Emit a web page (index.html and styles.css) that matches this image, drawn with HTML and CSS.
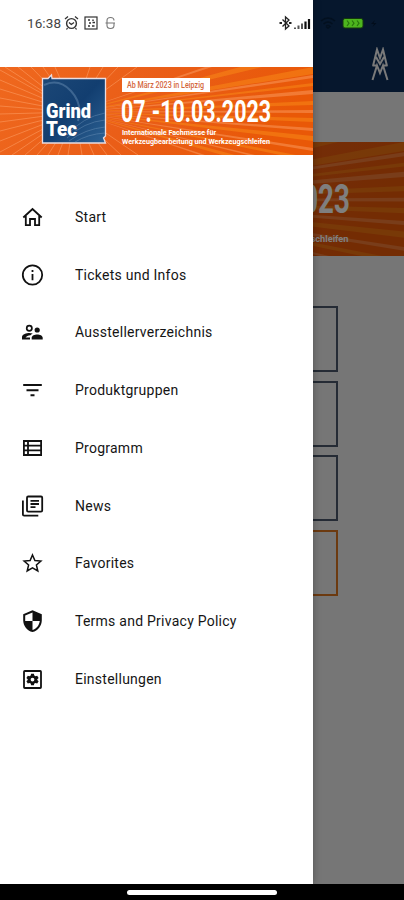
FILE: index.html
```
<!DOCTYPE html>
<html lang="de">
<head>
<meta charset="utf-8">
<meta name="viewport" content="width=device-width, initial-scale=1">
<title>GrindTec</title>
<link rel="stylesheet" href="styles.css">
</head>
<body>
<svg class="defs" aria-hidden="true">
  <defs>
    <linearGradient id="orange" x1="0" x2="1" y1="0" y2="0.2">
      <stop offset="0" stop-color="#ef681e"/><stop offset=".5" stop-color="#ea5e18"/><stop offset="1" stop-color="#e95807"/>
    </linearGradient>
    <linearGradient id="blue" x1="0" x2="1" y1="0" y2="1">
      <stop offset="0" stop-color="#1c4877"/><stop offset=".5" stop-color="#123e70"/><stop offset="1" stop-color="#2d6294"/>
    </linearGradient>
  </defs>
  <symbol id="banner" viewBox="0 0 313 88" preserveAspectRatio="none">
    <rect width="313" height="88" fill="url(#orange)"/>
    <g fill="#f98c18" opacity=".5">
      <path d="M75 45L240 0H262ZM75 45L313 0V7ZM75 45L313 16V19ZM75 45L313 34V38ZM75 45L313 51V55ZM75 45L313 69V74ZM75 45L296 88H280ZM75 45L235 88H222Z"/>
    </g>
    <g fill="#ffb078" opacity=".4">
      <path d="M75 45L313 8V11ZM75 45L313 23V27ZM75 45L313 43V46ZM75 45L313 61V64ZM75 45L313 81V84ZM75 45L205 0H212ZM75 45L255 88H248ZM75 45L205 88H200Z"/>
    </g>
    <g stroke="#ffa56c" stroke-width="1" opacity=".5">
      <path d="M75 45L0 3M75 45L0 13M75 45L0 22M75 45L0 31M75 45L0 39M75 45L0 47M75 45L0 55M75 45L0 64M75 45L0 74M75 45L0 85M75 45L12 88M75 45L25 88M75 45L37 88M75 45L48 88M75 45L58 88M75 45L68 88M75 45L82 88M75 45L94 88M75 45L107 88M75 45L121 88M75 45L138 88M75 45L5 0M75 45L18 0M75 45L31 0M75 45L43 0M75 45L55 0M75 45L90 0M75 45L103 0M75 45L118 0M75 45L137 0"/>
    </g>
    <path d="M42.500 11.500H48L51.500 8L52 11.500H105.500V69L103.500 71L105.500 76H42.500Z" fill="url(#blue)" stroke="#e9dce0" stroke-width="1.300"/>
    <g fill="none" stroke="#789cc0" opacity=".4">
      <path d="M44 18Q59 11 71 24T78 54" stroke-width="2"/>
      <path d="M67 68Q83 50 105 46M67 71Q84 55 105 53M69 74Q85 62 105 60M75 75Q88 67 105 66" stroke-width="1"/>
    </g>
    <g class="banner-text">
      <text x="46" y="51" font-size="20" font-weight="900" textLength="45" lengthAdjust="spacingAndGlyphs">Grind</text>
      <text x="46" y="69" font-size="20" font-weight="900" textLength="31" lengthAdjust="spacingAndGlyphs">Tec</text>
      <rect x="122" y="11" width="88" height="14" fill="#fff"/>
      <text class="banner-date" x="127" y="21.200" font-size="8.500" font-weight="500" textLength="77" lengthAdjust="spacingAndGlyphs">Ab März 2023 in Leipzig</text>
      <text x="121" y="54.500" font-size="32" font-weight="700" textLength="150" lengthAdjust="spacingAndGlyphs">07.-10.03.2023</text>
      <text x="122" y="67.500" font-size="7.300" font-weight="700" textLength="94" lengthAdjust="spacingAndGlyphs">Internationale Fachmesse für</text>
      <text x="122" y="77.300" font-size="7.300" font-weight="700" textLength="148" lengthAdjust="spacingAndGlyphs">Werkzeugbearbeitung und Werkzeugschleifen</text>
    </g>
  </symbol>
</svg>

<div class="phone">
  <div class="screen">
    <main class="page">
      <header class="app-bar">
        <svg class="fair-logo" width="18" height="34" viewBox="0 0 18 34" aria-hidden="true">
          <path d="M2 19L6 2.500L9 11L12 2.500L16 19M5 10L9 17L13 10M1.500 33L6 18.500L9 26L12 18.500L16.500 33M1.500 18.500H6.500M11.500 18.500H16.500"/>
        </svg>
      </header>
      <svg class="page-banner" aria-hidden="true"><use href="#banner"/></svg>
      <div class="tiles">
        <div class="tile"></div>
        <div class="tile"></div>
        <div class="tile"></div>
        <div class="tile tile-accent"></div>
      </div>
    </main>
    <div class="scrim"></div>

    <aside class="drawer">
      <svg class="drawer-banner" role="img" aria-label="GrindTec"><use href="#banner"/></svg>
      <nav class="menu">
        <a class="item"><svg class="icon line" viewBox="0 0 26 26"><path d="M4.300 13.500L13.500 5L22.700 13.500M6.800 12V21.200H11V15H16V21.200H20.200V12"/></svg><span>Start</span></a>
        <a class="item"><svg class="icon line" viewBox="0 0 26 26"><circle cx="13.500" cy="13" r="9.700"/><path d="M13.500 12V18.300M13.500 8V10"/></svg><span>Tickets und Infos</span></a>
        <a class="item"><svg class="icon" viewBox="0 0 26 26"><circle cx="10.300" cy="9.200" r="2.600" fill="none" stroke="#111" stroke-width="1.700"/><circle cx="18.200" cy="11" r="2.600"/><path d="M18.200 15.400C15.600 15.400 12.700 16.600 12.700 18.700V20.500H23.700V18.700C23.700 16.600 20.800 15.400 18.200 15.400ZM10.300 14C7.600 14 3 15.300 3 18V20.500H11V18.500H6.500C7.500 17.500 9 16.500 11.500 16.300Q12.500 15 13.800 14.500Q12 14 10.300 14Z"/></svg><span>Ausstellerverzeichnis</span></a>
        <a class="item"><svg class="icon" viewBox="0 0 26 26"><path d="M4.200 7H22.800V9H4.200ZM7.500 12.200H19.500V14.200H7.500ZM11.500 17.200H15.500V19.200H11.500Z"/></svg><span>Produktgruppen</span></a>
        <a class="item"><svg class="icon line" viewBox="0 0 26 26"><path d="M4.900 6H22.100V20H4.900ZM9 6V20M4.900 10.700H22.100M4.900 15.300H22.100"/></svg><span>Programm</span></a>
        <a class="item"><svg class="icon line" viewBox="0 0 26 26"><rect x="8" y="3.500" width="15.200" height="15.200" rx="1.200"/><path d="M3.900 7.500V21.500Q3.900 22.700 5.100 22.700H19.300M11.500 7.800H20M11.500 11H20M11.500 14.200H16.500"/></svg><span>News</span></a>
        <a class="item"><svg class="icon line star" viewBox="0 0 26 26"><path d="M13.500 5L15.900 10.500L21.900 11L17.400 15L18.800 21L13.500 17.800L8.200 21L9.600 15L5.100 11L11.100 10.500Z"/></svg><span>Favorites</span></a>
        <a class="item"><svg class="icon" viewBox="0 0 26 26"><g transform="translate(1 .8)"><path d="M12.500 1.500L3.200 5.500V11.500C3.200 17 7.100 22 12.500 23.300C17.900 22 21.800 17 21.800 11.500V5.500ZM12.500 12.300H19.800C19.200 16.500 16.400 20.100 12.500 21.300V12.300H5.200V6.800L12.500 3.700Z"/></g></svg><span>Terms and Privacy Policy</span></a>
        <a class="item"><svg class="icon line" viewBox="0 0 26 26"><rect x="5" y="5" width="17" height="17" rx=".8"/><path fill="#111" stroke="none" fill-rule="evenodd" d="M12.100 7.800H14.900L15.300 9.500L16.500 10.200L18.200 9.700L19.600 12L18.300 13.200V14L19.600 15.200L18.200 17.400L16.500 16.900L15.300 17.600L14.900 19.200H12.100L11.700 17.600L10.500 16.900L8.800 17.400L7.400 15.200L8.700 14V13.200L7.400 12L8.800 9.700L10.500 10.200L11.700 9.500ZM13.500 11.700A1.900 1.900 0 1 0 13.500 15.500A1.900 1.900 0 1 0 13.500 11.700Z"/></svg><span>Einstellungen</span></a>
      </nav>
    </aside>

    <div class="status-bar">
      <span class="clock">16:38</span>
      <svg class="status-left" width="54" height="16" viewBox="0 0 54 16" fill="none" stroke="#333" aria-hidden="true">
        <circle cx="7.500" cy="8.500" r="4.900" stroke-width="1.400"/><path d="M5 7.500L7.300 9.500L10 7.500M1 4L4 1.500M14 4L11 1.500M3.500 13L2.500 14.500M11.500 13L12.500 14.500" stroke-width="1.300"/>
        <rect x="21" y="2" width="12" height="12" stroke-width="1.200"/><path d="M24 5H26M24 11H26M28.500 7.500H31M25 8H27M28 11H30.500M29 4.500V6" stroke-width="1.500"/>
        <path d="M50 5.500Q50 2.500 46.500 2.500T43 5.500V10.500Q43 13.500 46.500 13.500T50 10.500V8.500M41.500 8H51" stroke="#777" stroke-width="1.100"/>
      </svg>
      <svg class="status-right" width="104" height="16" viewBox="0 0 104 16" fill="none" aria-hidden="true">
        <path d="M4.500 4.500L11 11L7.500 14V2L11 5L4.500 11.500" stroke="#222" stroke-width="1.300"/>
        <path d="M1.500 8H4M11 8H13.500" stroke="#222" stroke-width="2"/>
        <path d="M17 14V12.500M20.500 14V10.500M24 14V8.500" stroke="#555" stroke-width="2"/><path d="M27.500 14V6.500M31 14V4" stroke="#111" stroke-width="2.200"/>
        <path d="M43 6Q50 0 57 6M45.500 9Q50 5 54.500 9M48 11.500L50 13L52 11.500Q50 9.500 48 11.500" stroke="#03101f" stroke-width="1.500"/>
        <rect x="65" y="3.500" width="20" height="9.500" rx="2" fill="#4db51e" stroke="#14380c"/><path d="M69 5.500L71 8.200L69 11M74 5.500L76 8.200L74 11M79 5.500L81 8.200L79 11" stroke="#29740e" stroke-width="1.200"/>
        <path d="M97 5L93 9H96L94.500 12L98.500 8H95.500Z" fill="#020d1b"/>
      </svg>
    </div>
  </div>
  <footer class="nav-bar"><div class="handle"></div></footer>
</div>
</body>
</html>
```

FILE: styles.css
```
* { box-sizing: border-box; }

body {
  margin: 0;
  font-family: Roboto, "Liberation Sans", sans-serif;
}

.defs {
  position: absolute;
  width: 0;
  height: 0;
}

.phone {
  display: flex;
  flex-direction: column;
  width: 404px;
  height: 900px;
  overflow: hidden;
  background: #000;
}

.screen {
  position: relative;
  flex: 0 0 884px;
  overflow: hidden;
}

.page {
  height: 100%;
  background: #ececec;
}

.app-bar {
  display: flex;
  justify-content: flex-end;
  height: 92px;
  padding: 47px 15px 0 0;
  background: #0c2f5a;
}

.fair-logo {
  fill: none;
  stroke: #f4f4f4;
  stroke-width: 2;
}

.page-banner {
  display: block;
  width: 404px;
  height: 114px;
  margin-top: 50px;
}

.tiles {
  display: flex;
  flex-direction: column;
  gap: 8.500px;
  padding: 50px 66px 0;
}

.tile {
  height: 66px;
  border: 2px solid #4a566a;
}

.tile-accent { border-color: #d97420; }

.scrim {
  position: absolute;
  inset: 0;
  background: rgba(0, 0, 0, 0.5);
}

.drawer {
  position: absolute;
  top: 0;
  bottom: 0;
  left: 0;
  width: 313px;
  padding-top: 67px;
  background: #fff;
  box-shadow: 0 0 8px rgba(0, 0, 0, 0.3);
}

.drawer-banner {
  display: block;
  width: 313px;
  height: 88px;
}

.banner-text {
  fill: #fff;
  font-family: Roboto, "Liberation Sans", sans-serif;
}

.banner-date { fill: #d4663b; }

.menu {
  display: flex;
  flex-direction: column;
  padding: 33px 0 0 19px;
}

.item {
  display: flex;
  align-items: center;
  gap: 30px;
  height: 57.780px;
  color: #151515;
  font-size: 14px;
  letter-spacing: 0.250px;
  white-space: nowrap;
}

.icon {
  flex: none;
  width: 26px;
  height: 26px;
  fill: #111;
}

.line {
  fill: none;
  stroke: #111;
  stroke-width: 1.800;
}

.star { stroke-width: 1.500; }

.status-bar {
  position: absolute;
  top: 14px;
  left: 0;
  display: flex;
  align-items: center;
  width: 404px;
  height: 18px;
  padding-left: 27px;
}

.clock {
  width: 37px;
  color: #444;
  font-size: 13.500px;
  letter-spacing: 0.100px;
}

.status-right { margin-left: 160px; }

.nav-bar {
  display: flex;
  flex: 1;
  justify-content: center;
  padding-top: 6px;
}

.handle {
  width: 150px;
  height: 5px;
  border-radius: 3px;
  background: #fff;
}
```
